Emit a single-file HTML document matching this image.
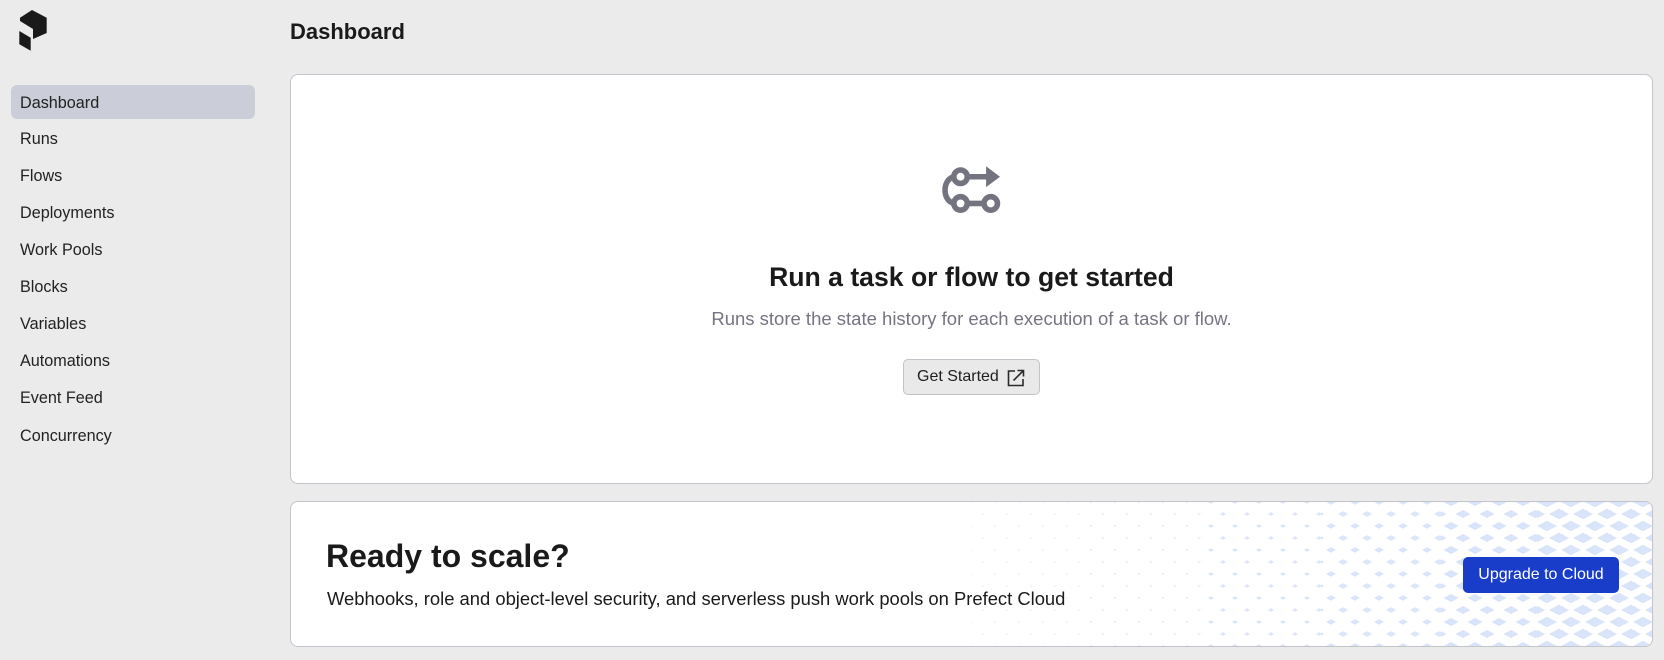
<!DOCTYPE html>
<html><head><meta charset="utf-8"><style>
*{box-sizing:border-box;margin:0;padding:0}
body{width:1664px;height:660px;background:#ebebeb;font-family:"Liberation Sans",sans-serif;color:#1a1a1a;position:relative;overflow:hidden}
.nav{position:absolute;left:11px;width:244px;height:34px;line-height:34px;padding-left:9px;font-size:16.2px;color:#222;border-radius:6px}
.nav.active{background:#cbced8}
.abs{position:absolute}
</style></head><body>
<svg class="abs" style="left:0;top:0" width="60" height="60" viewBox="0 0 60 60">
<polygon points="20,17.7 32,10 46.7,17.7 46.7,33 33,39 33,29 20,21" fill="#1a1a1a"/>
<polygon points="19.3,31 30.7,37.7 30.7,50.7 19.3,44.3" fill="#1a1a1a"/>
</svg>
<div class="nav active" style="top:85px;line-height:36px">Dashboard</div>
<div class="nav" style="top:122px">Runs</div>
<div class="nav" style="top:159px">Flows</div>
<div class="nav" style="top:196px">Deployments</div>
<div class="nav" style="top:233px">Work Pools</div>
<div class="nav" style="top:270px">Blocks</div>
<div class="nav" style="top:307px">Variables</div>
<div class="nav" style="top:344px">Automations</div>
<div class="nav" style="top:381px">Event Feed</div>
<div class="nav" style="top:419px">Concurrency</div>

<div class="abs" style="left:290px;top:19px;font-size:22px;font-weight:bold;">Dashboard</div>

<div class="abs" style="left:290px;top:74px;width:1363px;height:410px;background:#fff;border:1px solid #c4c4cc;border-radius:8px"></div>
<svg class="abs" style="left:935px;top:157px" width="72" height="65" viewBox="940 162 62 56" fill="none" stroke="#747480" stroke-width="4.8">
<circle cx="962" cy="179" r="5.8"/>
<circle cx="962" cy="202" r="5.8"/>
<circle cx="988" cy="202" r="5.8"/>
<path d="M956.5 179 C946 181 946 200 956.5 202"/>
<path d="M967.5 179 H986"/>
<path d="M967.5 202 H982.5"/>
<polygon points="984,170 996,179 984,188" fill="#747480" stroke="none"/>
</svg>
<div class="abs" style="left:290px;top:262px;width:1363px;text-align:center;font-size:26.6px;font-weight:bold;color:#1a1a1a">Run a task or flow to get started</div>
<div class="abs" style="left:290px;top:308px;width:1363px;text-align:center;font-size:18.5px;color:#757582">Runs store the state history for each execution of a task or flow.</div>
<div class="abs" style="left:903px;top:359px;width:137px;height:36px;background:#e9e9ea;border:1px solid #c2c2c8;border-radius:5px;font-size:16px;line-height:34px;padding-left:13px;color:#1f1f1f">Get Started
<svg style="position:absolute;left:102px;top:8px" width="20" height="20" viewBox="0 0 20 20" fill="none" stroke="#2a2a2a" stroke-width="1.6"><path d="M9 3H2.5V17.5H17V11"/><path d="M7.5 12.5L17.5 2.5M11.5 2.5H17.5V8.5"/></svg></div>

<div class="abs" style="left:290px;top:501px;width:1363px;height:146px;background:#fff;border:1px solid #c4c4cc;border-radius:8px;overflow:hidden">
<svg class="abs" style="left:680px;top:0" width="683" height="146">
<defs>
<g id="d1"><polygon points="-1.5,0 0,-1 1.5,0 0,1"/></g>
<pattern id="p1" width="24" height="24" patternUnits="userSpaceOnUse" fill="#dde5f7"><polygon points="10.5,12 12,11 13.5,12 12,13"/><polygon points="-1.5,0 0,-1 1.5,0 0,1"/><polygon points="22.5,0 24,-1 25.5,0 24,1"/><polygon points="-1.5,24 0,23 1.5,24 0,25"/><polygon points="22.5,24 24,23 25.5,24 24,25"/></pattern>
<pattern id="p2" width="24" height="24" patternUnits="userSpaceOnUse" fill="#dbe4f9"><polygon points="9,12 12,10.2 15,12 12,13.8"/><polygon points="-3,0 0,-1.8 3,0 0,1.8"/><polygon points="21,0 24,-1.8 27,0 24,1.8"/><polygon points="-3,24 0,22.2 3,24 0,25.8"/><polygon points="21,24 24,22.2 27,24 24,25.8"/></pattern>
<pattern id="p3" width="24" height="24" patternUnits="userSpaceOnUse" fill="#dae4fa"><polygon points="7,12 12,9.2 17,12 12,14.8"/><polygon points="-5,0 0,-2.8 5,0 0,2.8"/><polygon points="19,0 24,-2.8 29,0 24,2.8"/><polygon points="-5,24 0,21.2 5,24 0,26.8"/><polygon points="19,24 24,21.2 29,24 24,26.8"/></pattern>
<pattern id="p4" width="24" height="24" patternUnits="userSpaceOnUse" fill="#d9e3fa"><polygon points="4.5,12 12,8 19.5,12 12,16"/><polygon points="-7.5,0 0,-4 7.5,0 0,4"/><polygon points="16.5,0 24,-4 31.5,0 24,4"/><polygon points="-7.5,24 0,20 7.5,24 0,28"/><polygon points="16.5,24 24,20 31.5,24 24,28"/></pattern>
<pattern id="p5" width="24" height="24" patternUnits="userSpaceOnUse" fill="#d9e3fa"><polygon points="2,12 12,6.8 22,12 12,17.2"/><polygon points="-10,0 0,-5.2 10,0 0,5.2"/><polygon points="14,0 24,-5.2 34,0 24,5.2"/><polygon points="-10,24 0,18.8 10,24 0,29.2"/><polygon points="14,24 24,18.8 34,24 24,29.2"/></pattern>
</defs>
<rect x="0" y="0" width="110" height="146" fill="url(#p1)" opacity="0.6"/>
<rect x="110" y="0" width="120" height="146" fill="url(#p1)"/>
<rect x="230" y="0" width="120" height="146" fill="url(#p2)"/>
<rect x="350" y="0" width="120" height="146" fill="url(#p3)"/>
<rect x="470" y="0" width="96" height="146" fill="url(#p4)"/>
<rect x="566" y="0" width="117" height="146" fill="url(#p5)"/>
</svg>
<div class="abs" style="left:35px;top:36px;font-size:32px;font-weight:bold;color:#1a1a1a">Ready to scale?</div>
<div class="abs" style="left:36px;top:86px;font-size:18.4px;color:#1a1a1a">Webhooks, role and object-level security, and serverless push work pools on Prefect Cloud</div>
<div class="abs" style="left:1172px;top:55px;width:156px;height:36px;background:#1a3dc9;border-radius:5px;color:#fff;font-size:16px;line-height:36px;text-align:center">Upgrade to Cloud</div>
</div>
</body></html>
